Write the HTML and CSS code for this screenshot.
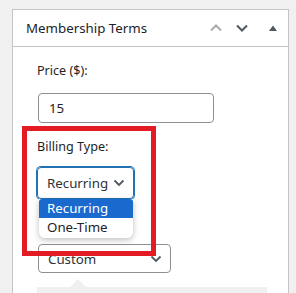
FILE: index.html
```html
<!DOCTYPE html>
<html lang="en">
<head>
  <meta charset="UTF-8">
  <title>Membership Terms</title>
  <link rel="stylesheet" href="styles.css">
</head>
<body>
  <div class="postbox">
    <div class="postbox-header">
      <h2>Membership Terms</h2>
      <div class="handle-actions">
        <svg class="move up" width="14" height="14" viewBox="0 0 14 14"><path d="M2 9.5 L7 4.5 L12 9.5" fill="none" stroke="currentColor" stroke-width="2"/></svg>
        <svg class="move" width="14" height="14" viewBox="0 0 14 14"><path d="M2 4.5 L7 9.5 L12 4.5" fill="none" stroke="currentColor" stroke-width="2"/></svg>
        <svg class="toggle" width="10" height="10" viewBox="0 0 10 10"><path d="M1 8 L5 2.5 L9 8 Z" fill="currentColor"/></svg>
      </div>
    </div>
    <div class="inside">
      <label class="field-label">Price ($):</label>
      <div class="text-input">15</div>

      <label class="field-label">Billing Type:</label>
      <div class="select focused">
        <span>Recurring</span>
        <svg width="12" height="8" viewBox="0 0 12 8"><path d="M1.5 1.5 L6 6 L10.5 1.5" fill="none" stroke="currentColor" stroke-width="1.8"/></svg>
      </div>

      <!-- label hidden behind the open dropdown -->
      <div class="field-spacer"></div>
      <div class="select wide">
        <span>Custom</span>
        <svg width="12" height="8" viewBox="0 0 12 8"><path d="M1.5 1.5 L6 6 L10.5 1.5" fill="none" stroke="currentColor" stroke-width="1.8"/></svg>
      </div>

      <div class="note"></div>
    </div>
  </div>

  <!-- open dropdown of the billing select -->
  <ul class="dropdown">
    <li class="selected">Recurring</li>
    <li>One-Time</li>
  </ul>

  <!-- annotation -->
  <div class="highlight"></div>
</body>
</html>
```

FILE: styles.css
```css
html {
  overflow: hidden;
}
body {
  margin: 0;
  background: #f0f0f1;
  font-family: 'Noto Sans', 'Open Sans', sans-serif;
  color: #1d2327;
  padding: 9px 0 0 12px;
  height: 293px;
  box-sizing: border-box;
  overflow: hidden;
  position: relative;
}
.postbox {
  width: 275px;
  background: #fff;
  border: 1px solid #c3c4c7;
  border-bottom: none;
  height: 284px;
}
.postbox-header {
  height: 36px;
  border-bottom: 1px solid #c3c4c7;
  display: flex;
  align-items: center;
  padding: 0 10px 0 13px;
}
.postbox-header h2 {
  flex: 1;
  margin: 0;
  font-size: 13.3px;
  font-weight: 400;
  color: #1d2327;
}
.handle-actions {
  display: flex;
  align-items: center;
  gap: 12px;
  color: #50575e;
}
.handle-actions .up {
  color: #a7aaad;
}
.handle-actions .toggle {
  margin-left: 7px;
}
.inside {
  padding: 15px 0 0 24px;
}
.field-label {
  display: block;
  font-size: 12.6px;
  line-height: 18px;
  color: #1d2327;
}
.field-spacer {
  height: 18px;
}
.text-input {
  width: 154px;
  height: 28px;
  margin: 13px 0 15px 1px;
  border: 1px solid #8c8f94;
  border-radius: 4px;
  padding: 0 10px;
  font-size: 13.3px;
  line-height: 28px;
}
.select {
  display: flex;
  align-items: center;
  justify-content: space-between;
  border: 1px solid #8c8f94;
  border-radius: 4px;
  padding: 0 8px 0 9px;
  font-size: 13.3px;
  color: #2c3338;
  box-sizing: border-box;
}
.select svg {
  color: #50575e;
}
.select.focused {
  width: 97px;
  height: 32px;
  margin: 11px 0 12px 0;
  border-color: #2271b1;
  box-shadow: 0 0 0 1px #2271b1;
}
.select.wide {
  width: 133px;
  height: 29px;
  margin: 15px 0 14px 1px;
}
.note {
  width: 230px;
  height: 20px;
  background: #f0f0f1;
  position: relative;
}
.note::before {
  content: "";
  position: absolute;
  left: 33px;
  top: -8px;
  border-left: 8px solid transparent;
  border-right: 8px solid transparent;
  border-bottom: 8px solid #f0f0f1;
}
.dropdown {
  position: absolute;
  left: 39px;
  top: 199px;
  width: 94px;
  margin: 0;
  padding: 0 0 1px 0;
  list-style: none;
  background: #fff;
  border-radius: 0 0 6px 6px;
  box-shadow: 0 2px 6px rgba(0,0,0,0.25);
  font-size: 13.3px;
  color: #1d2327;
}
.dropdown li {
  height: 19px;
  line-height: 19px;
  padding-left: 8px;
}
.dropdown li.selected {
  background: #1a69cf;
  color: #fff;
  border-radius: 3px 3px 0 0;
}
.highlight {
  position: absolute;
  left: 22px;
  top: 126px;
  width: 124px;
  height: 120px;
  border: 5px solid #e21b24;
}
```
